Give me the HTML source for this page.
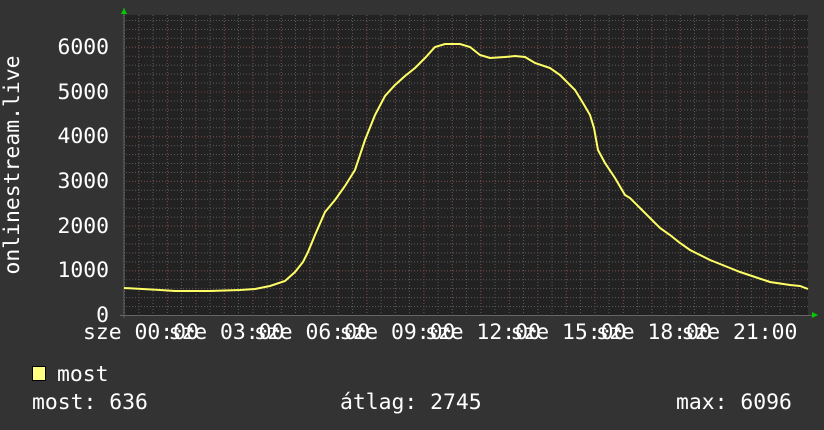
<!DOCTYPE html>
<html><head><style>
body{margin:0;background:#333;}
svg{display:block}
text{font-family:"DejaVu Sans Mono","Liberation Mono",monospace;font-size:21.4px;fill:#fff}
</style></head><body>
<svg width="824" height="430" xmlns="http://www.w3.org/2000/svg">
<defs>
<pattern id="vmin" x="124" y="0" width="14.25" height="430" patternUnits="userSpaceOnUse">
<line x1="0.5" y1="0" x2="0.5" y2="430" stroke="#5a5a5a" stroke-dasharray="1,2"/>
</pattern>
<pattern id="hmin" x="0" y="315" width="824" height="8.94" patternUnits="userSpaceOnUse">
<line x1="0" y1="0.5" x2="824" y2="0.5" stroke="#5a5a5a" stroke-dasharray="1,2"/>
</pattern>
<pattern id="vmaj" x="110" y="0" width="28.5" height="430" patternUnits="userSpaceOnUse">
<line x1="0.5" y1="0" x2="0.5" y2="430" stroke="#744" stroke-dasharray="1,2"/>
</pattern>
<pattern id="hmaj" x="0" y="315" width="824" height="44.7" patternUnits="userSpaceOnUse">
<line x1="0" y1="0.5" x2="824" y2="0.5" stroke="#744" stroke-dasharray="1,2"/>
</pattern>
</defs>
<rect x="124" y="15" width="684" height="300" fill="#222"/>
<rect x="124" y="15" width="684" height="300" fill="url(#vmin)"/>
<rect x="124" y="15" width="684" height="300" fill="url(#hmin)"/>
<rect x="124" y="15" width="684" height="300" fill="url(#vmaj)"/>
<rect x="124" y="15" width="684" height="300" fill="url(#hmaj)"/>
<line x1="124" y1="8" x2="124" y2="318" stroke="#666"/>
<line x1="120" y1="315.5" x2="814" y2="315.5" stroke="#666"/>
<polygon points="121,14 127,14 124,8" fill="#0c0"/>
<polygon points="812,312 812,318 818,315" fill="#0c0"/>
<polyline fill="none" stroke="#ffff66" stroke-width="2" points="124,288 160,290 175,291 210,291 240,290 255,289 270,286 285,281 295,272 303,262 308,252 315,235 325,212 335,200 345,186 355,170 365,140 375,115 385,96 395,85 405,76 415,68 425,58 435,47 445,44 460,44 470,47 480,55 490,58 505,57 515,56 525,57 535,63 550,68 560,75 575,90 583,103 590,115 594,128 598,150 605,163 615,178 625,195 630,198 640,208 650,218 660,228 670,235 680,243 690,250 700,255 710,260 720,264 730,268 740,272 755,277 770,282 790,285 800,286 808,289"/>
<g text-anchor="end">
<text x="109" y="54">6000</text>
<text x="109" y="99">5000</text>
<text x="109" y="143">4000</text>
<text x="109" y="188">3000</text>
<text x="109" y="233">2000</text>
<text x="109" y="277">1000</text>
<text x="109" y="322">0</text>
</g>
<text transform="translate(19,165) rotate(-90)" text-anchor="middle">onlinestream.live</text>
<g>
<text x="83" y="339">sze 00:00</text>
<text x="168.5" y="339">sze 03:00</text>
<text x="254" y="339">sze 06:00</text>
<text x="339.5" y="339">sze 09:00</text>
<text x="425" y="339">sze 12:00</text>
<text x="510.5" y="339">sze 15:00</text>
<text x="596" y="339">sze 18:00</text>
<text x="681.5" y="339">sze 21:00</text>
</g>
<rect x="32.5" y="366.5" width="13" height="14" fill="#ffff80" stroke="#000"/>
<text x="57" y="381">most</text>
<text x="32" y="409">most: 636</text>
<text x="340" y="409">átlag: 2745</text>
<text x="676" y="409">max: 6096</text>
</svg>
</body></html>
